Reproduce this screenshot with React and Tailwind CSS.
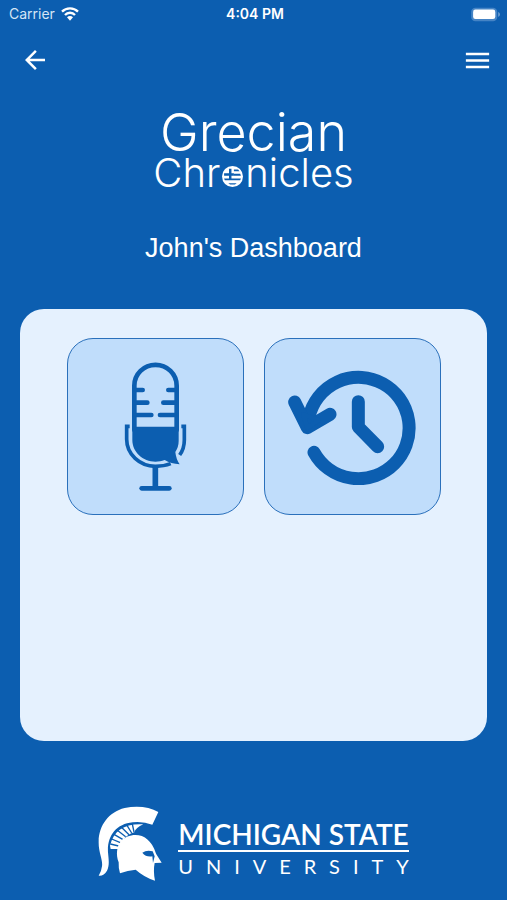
import { MdArrowBack, MdMenu } from 'react-icons/md';

function WifiIcon() {
  return (
    <svg viewBox="0 0 54 42" className="w-[18px] h-[14px]" fill="none" stroke="white" strokeWidth="7" aria-hidden="true">
      <path d="M3 14 C16 1 38 1 51 14" />
      <path d="M12 24 C20 15 34 15 42 24" />
      <path d="M18 31 C23 26 31 26 36 31 L27 41 Z" fill="white" stroke="none" />
    </svg>
  );
}

function BatteryIcon() {
  return (
    <svg viewBox="0 0 92 46" className="w-[31px] h-[15px]" aria-hidden="true">
      <rect x="2" y="2" width="80" height="42" rx="13" fill="#4584c5" />
      <rect x="8" y="8" width="68" height="29" rx="7" fill="white" />
      <path d="M85 15 C92 18 92 27 85 30 Z" fill="#6d9ed0" />
    </svg>
  );
}

function FlagIcon() {
  return (
    <svg viewBox="0 0 60 60" className="w-[21px] h-[21px]" aria-hidden="true">
      <circle cx="30" cy="30" r="30" fill="white" />
      <g fill="#0c5eb0">
        <path d="M20 8 H27 V21 H34 V28 H27 V37 H20 V28 H6 V21 H20 Z" />
        <path d="M34 10 H46 L50 15 H34 Z M34 22 H52 L54 28 H34 Z" />
        <path d="M6 36 H54 L52 41 H8 Z M18 49 H42 L37 53 H23 Z" />
      </g>
    </svg>
  );
}

function MicIcon() {
  return (
    <svg viewBox="69 63 192 393" className="w-[64px] h-[131px]" fill="none" stroke="#0c5eb0" strokeLinecap="round" aria-hidden="true">
      <path d="M103 270 V137 A63 62 0 0 1 230 137 V270" strokeWidth="14" />
      <path d="M109 150 H128 M109 188 H142 M109 225 H154 M224 150 H205 M224 188 H190 M224 225 H180" strokeWidth="14" />
      <path d="M97 260 H236 V303 Q236 321 226 336 Q228 357 239 373 Q213 371 194 360 C144 378 97 344 97 300 Z" fill="#0c5eb0" stroke="none" />
      <path d="M89 259 H80 V298 C80 343 119 379 166 379 Q192 379 212 371" strokeWidth="11" strokeLinecap="butt" />
      <path d="M244 259 H253 V300 Q253 326 239 345" strokeWidth="11" strokeLinecap="butt" />
      <path d="M166 380 V440" strokeWidth="17" strokeLinecap="butt" />
      <path d="M125 445 H208" strokeWidth="14" />
    </svg>
  );
}

function HistoryIcon() {
  return (
    <svg viewBox="84 102 384 348" className="w-[128px] h-[116px]" fill="none" stroke="#0c5eb0" strokeWidth="39" strokeLinecap="round" strokeLinejoin="round" aria-hidden="true">
      <path d="M162 352 A152 152 0 1 0 147 246" />
      <path d="M104 201 L142 278 L210 238" />
      <path d="M130 238 L142 278 L176 256 Z" fill="#0c5eb0" strokeWidth="14" />
      <path d="M295 200 V276 L353 335" />
    </svg>
  );
}

function HelmetIcon() {
  return (
    <svg viewBox="24 18 192 225" className="w-[64px] h-[75px]" fill="white" aria-hidden="true">
      <path d="M205 36 C178 20 140 16 104 24 C56 36 27 76 26 124 C25 158 39 178 36 199 Q34 216 26 227 Q41 229 51 212 C59 195 56 179 54 157 C51 109 78 72 128 67 Q160 64 187 74 Z" />
      <path d="M160 73 C105 70 71 91 60 137 L62 147 L84 147 C96 116 113 103 133 97 Q137 83 160 73 Z" />
      <path d="M61 132 L86 138 M65 117 L91 128 M72 103 L98 118 M82 91 L107 110 M96 83 L117 104 M111 76 L125 99 M127 72 L132 96" stroke="#0c5eb0" strokeWidth="4" />
      <path d="M90 220 Q85 202 86 187 C77 165 80 139 93 124 C112 102 150 98 173 119 C188 132 194 149 199 163 L215 188 L194 189 Q189 213 195 242 Q163 232 137 209 Q113 211 90 220 Z" />
      <path d="M157 158 Q170 149 188 154 L194 169 L189 189 L187 169 Q168 172 157 158 Z" fill="#0c5eb0" />
    </svg>
  );
}

export default function App() {
  return (
    <div className="min-h-screen flex flex-col bg-[#0c5eb0] text-white">
      <div className="grid grid-cols-3 items-center h-7 pl-[9px] pr-[6px] font-[Inter,sans-serif] text-sm">
        <div className="flex items-center gap-[6px] text-[#d5e5f5]">
          <span>Carrier</span>
          <WifiIcon />
        </div>
        <span className="text-center font-semibold">4:04 PM</span>
        <div className="flex justify-end">
          <BatteryIcon />
        </div>
      </div>

      <nav className="flex items-center justify-between h-16 pl-5 pr-[14px]">
        <button type="button" aria-label="Back">
          <MdArrowBack className="size-[30px]" />
        </button>
        <button type="button" aria-label="Menu">
          <MdMenu className="size-[31px]" />
        </button>
      </nav>

      <header className="flex flex-col items-center pt-4">
        <div className="flex flex-col items-center font-[Inter,sans-serif] font-[350]">
          <span className="text-[52px] leading-[50px]">Grecian</span>
          <span className="flex items-center text-[40px] leading-[30px]">
            Chr
            <span className="px-[2px] pt-[6px]"><FlagIcon /></span>
            nicles
          </span>
        </div>
        <h1 className="mt-11 font-['Liberation_Sans',sans-serif] text-[27px] leading-8">John's Dashboard</h1>
      </header>

      <main className="mt-[45px] mx-5 min-h-[432px] rounded-3xl bg-[#e5f1fe] pt-[29px]">
        <div className="flex justify-center gap-5">
          <button
            type="button"
            aria-label="Record"
            className="flex items-center justify-center size-[177px] rounded-[26px] border border-[#2a70bb] bg-[#c0ddfb]"
          >
            <MicIcon />
          </button>
          <button
            type="button"
            aria-label="History"
            className="flex items-center justify-center size-[177px] rounded-[26px] border border-[#2a70bb] bg-[#c0ddfb]"
          >
            <HistoryIcon />
          </button>
        </div>
      </main>

      <footer className="flex items-center justify-center gap-4 pt-[65px]">
        <HelmetIcon />
        <div className="pt-3 font-[Lato,sans-serif]">
          <div className="pb-[2px] text-[28px] leading-7 font-semibold border-b-2 border-white">MICHIGAN STATE</div>
          <div className="flex justify-between text-xl leading-7">
            {'UNIVERSITY'.split('').map((letter, i) => (
              <span key={i}>{letter}</span>
            ))}
          </div>
        </div>
      </footer>
    </div>
  );
}
